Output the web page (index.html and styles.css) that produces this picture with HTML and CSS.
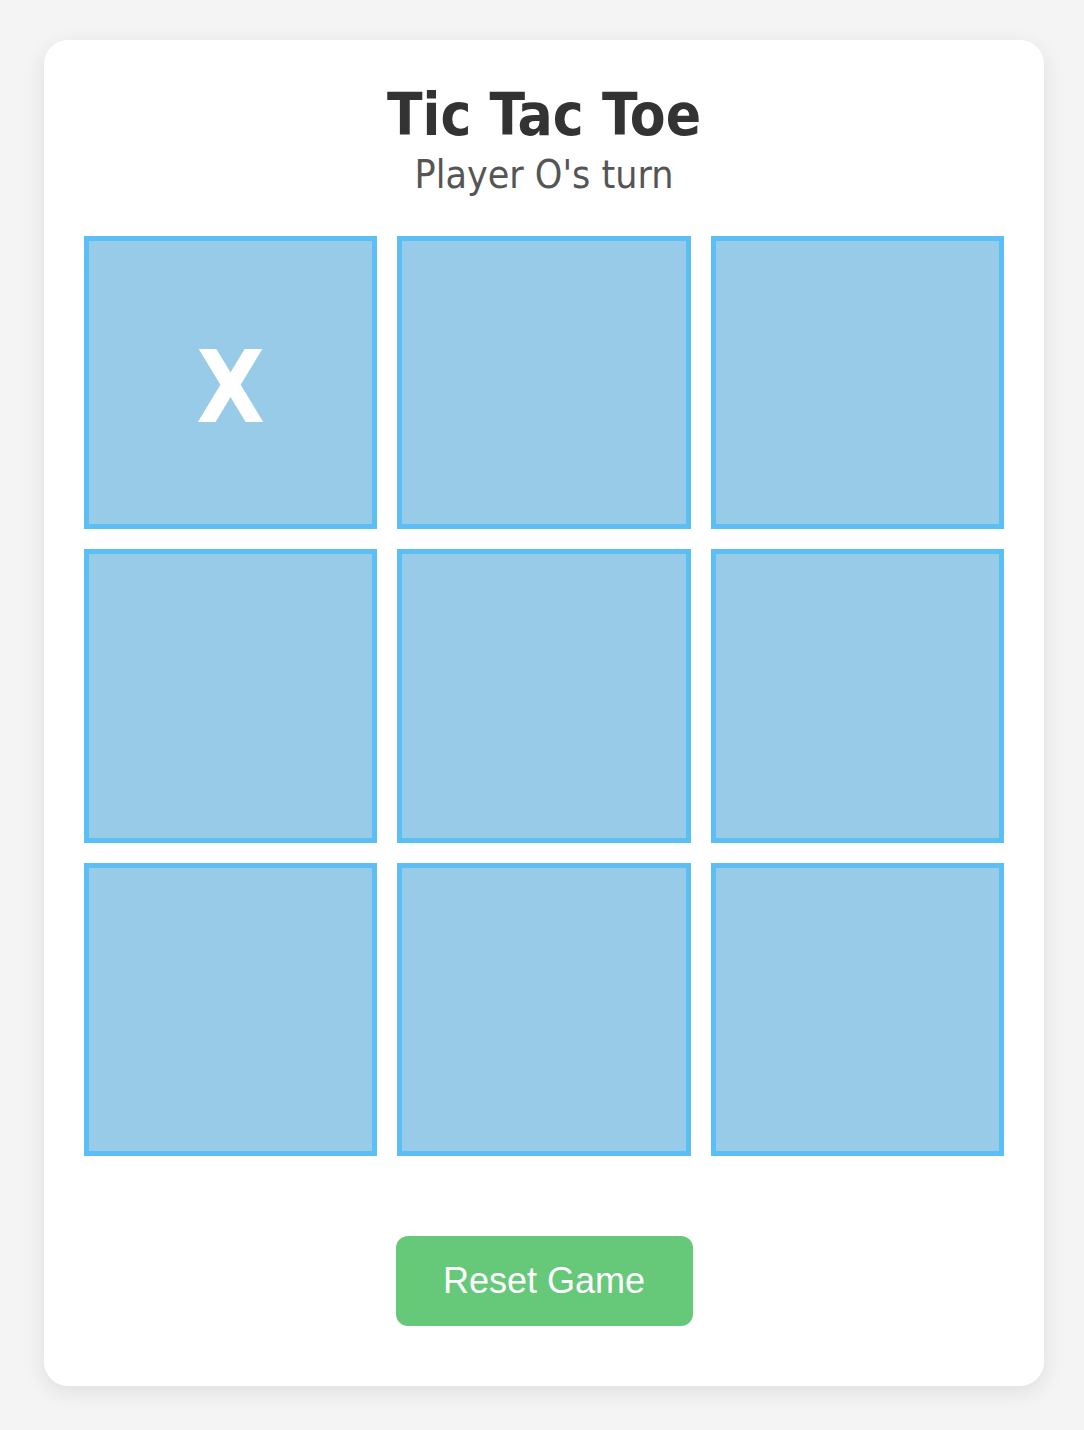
FILE: index.html
```html
<!DOCTYPE html>
<html lang="en">
<head>
<meta charset="utf-8">
<title>Tic Tac Toe</title>
<link rel="stylesheet" href="styles.css">
</head>
<body>
<main class="card">
  <h1 class="title">Tic Tac Toe</h1>
  <p class="status">Player O's turn</p>
  <div class="board">
    <button class="cell">X</button>
    <button class="cell"></button>
    <button class="cell"></button>
    <button class="cell"></button>
    <button class="cell"></button>
    <button class="cell"></button>
    <button class="cell"></button>
    <button class="cell"></button>
    <button class="cell"></button>
  </div>
  <div class="actions">
    <button class="reset">Reset Game</button>
  </div>
</main>
</body>
</html>
```

FILE: styles.css
```css
* { box-sizing: border-box; }

html, body {
  margin: 0;
  background: #f4f4f4;
}

body {
  padding: 40px 40px 44px 44px;
  font-family: "DejaVu Sans Condensed", "DejaVu Sans", sans-serif;
  font-stretch: condensed;
}

.card {
  width: 1000px;
  background: #ffffff;
  border-radius: 24px;
  box-shadow: 0 6px 22px rgba(0, 0, 0, 0.09);
  padding: 43px 40px 60px 40px;
  text-align: center;
}

.title {
  margin: 0;
  font-size: 58px;
  font-weight: bold;
  color: #333333;
  line-height: 65px;
}

.status {
  margin: 6px 0 0 0;
  font-size: 39px;
  color: #555555;
  line-height: 42px;
}

.board {
  margin-top: 40px;
  display: grid;
  grid-template-columns: repeat(3, 1fr);
  gap: 20px;
}

.cell {
  aspect-ratio: 1 / 1;
  margin: 0;
  padding: 10px 0 0 0;
  background: #98cbe8;
  border: 5px solid #5bbef5;
  border-radius: 0;
  color: #ffffff;
  font-family: "DejaVu Sans Condensed", "DejaVu Sans", sans-serif;
  font-stretch: condensed;
  font-weight: bold;
  font-size: 99px;
  line-height: 1;
  display: flex;
  align-items: center;
  justify-content: center;
}

.actions {
  margin-top: 80px;
  display: flex;
  justify-content: center;
}

.reset {
  width: 297px;
  height: 90px;
  background: #66c97a;
  border: none;
  border-radius: 12px;
  color: #ffffff;
  font-family: "Liberation Sans", Arial, sans-serif;
  font-size: 36px;
  padding: 0;
}
```
